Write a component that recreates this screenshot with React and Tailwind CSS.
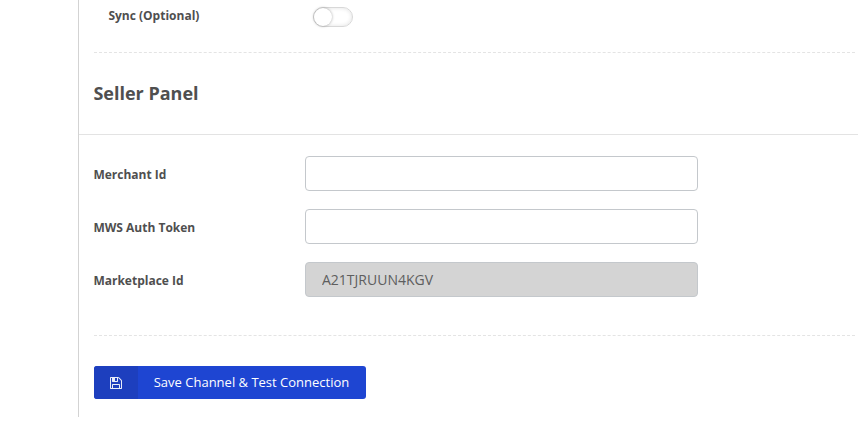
import React, { useState } from "react";

const fields = [
  { id: "merchant", label: "Merchant Id", value: "" },
  { id: "token", label: "MWS Auth Token", value: "" },
  { id: "marketplace", label: "Marketplace Id", value: "A21TJRUUN4KGV", disabled: true },
];

function SaveIcon() {
  return (
    <svg viewBox="0 128 1536 1536" className="w-3 h-3 opacity-90" fill="currentColor" aria-hidden="true">
      <path d="M384 1536h768v-384h-768v384zM1280 1536h128v-896q0-14-10-38.5t-20-34.5l-281-281q-10-10-34-20t-39-10v416q0 40-28 68t-68 28h-576q-40 0-68-28t-28-68v-416h-128v1280h128v-416q0-40 28-68t68-28h832q40 0 68 28t28 68v416zM896 608v-320q0-13-9.5-22.5t-22.5-9.5h-192q-13 0-22.5 9.5t-9.5 22.5v320q0 13 9.5 22.5t22.5 9.5h192q13 0 22.5-9.5t9.5-22.5zM1536 640v928q0 40-28 68t-68 28h-1344q-40 0-68-28t-28-68v-1344q0-40 28-68t68-28h928q40 0 88 20t76 48l280 280q28 28 48 76t20 88z" />
    </svg>
  );
}

export default function App() {
  const [sync, setSync] = useState(false);

  return (
    <div className="h-[421px] overflow-hidden bg-white pl-[78px] font-['Open_Sans',sans-serif] text-[#4f4f4f]">
      <div className="h-[417px] border-l border-[#d3d3d3]">
        {/* Sync toggle */}
        <div className="ml-[15px] mr-[3px] h-[53px] border-b border-dashed border-[#e4e4e4] flex items-start">
          <span className="w-[219px] pl-[14.4px] pt-[7px] text-xs leading-[18px] font-bold">
            Sync (Optional)
          </span>
          <button
            role="switch"
            aria-checked={sync}
            aria-label="Sync"
            onClick={() => setSync(!sync)}
            className={`mt-[7px] w-10 h-5 rounded-full border border-[#d8d8d8] flex items-center shadow-[inset_0_0_4px_rgba(0,0,0,0.12)] ${
              sync ? "justify-end bg-[#1e45d2]" : "justify-start bg-white"
            }`}
          >
            <span className="w-[18px] h-[18px] rounded-full bg-white shadow-[0_0_3px_rgba(0,0,0,0.35)]" />
          </button>
        </div>

        <h2 className="h-[82px] border-b border-[#e3e3e3] pl-[14.4px] pt-[28px] text-lg leading-6 font-bold">
          Seller Panel
        </h2>

        {/* Channel fields */}
        <div className="ml-[14px] mr-[3px] h-[201px] pt-[21px] pl-px flex flex-col gap-[18px]">
          {fields.map((f) => (
            <div key={f.id} className="flex items-center h-[35px]">
              <label htmlFor={f.id} className="w-[211px] -indent-[0.6px] pt-[3px] text-xs leading-[18px] font-bold">
                {f.label}
              </label>
              <input
                id={f.id}
                defaultValue={f.value}
                disabled={f.disabled}
                className="w-[393px] h-[35px] rounded-[4px] border border-[#c4c8cc] px-4 text-sm text-[#5e5e5e] bg-white disabled:bg-[#d4d4d4]"
              />
            </div>
          ))}
        </div>
        <hr className="-mt-px ml-[15px] mr-[3px] border-t border-dashed border-[#e4e4e4]" />

        <button className="mt-[30px] ml-[15px] h-[33px] w-[272px] flex items-stretch rounded-[3px] overflow-hidden bg-[#1e45d2] text-white">
          <span className="w-11 flex items-center justify-center bg-[#1d3fbe]">
            <SaveIcon />
          </span>
          <span className="flex-1 flex items-center justify-center pr-px text-[13px] font-medium whitespace-nowrap">
            Save Channel &amp; Test Connection
          </span>
        </button>
      </div>
    </div>
  );
}
